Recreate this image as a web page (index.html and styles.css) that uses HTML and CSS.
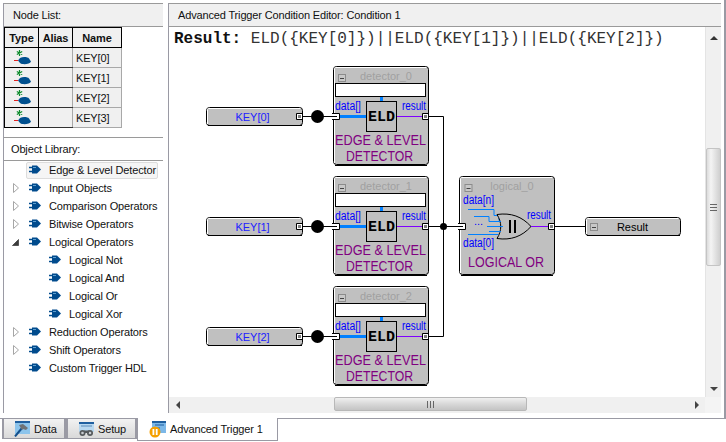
FILE: index.html
```html
<!DOCTYPE html>
<html lang="en">
<head>
  <meta charset="UTF-8">
  <title>Advanced Trigger Condition Editor</title>
  <link rel="stylesheet" href="styles.css">
</head>
<body>
  <!-- shared icons -->
  <svg class="sprite" aria-hidden="true">
    <symbol id="ico-pin" viewBox="0 0 12 10">
      <path d="M0 2.500h4M0 6.500h4" stroke="#004b8d" stroke-width="1.400"/>
      <path d="M3 0.500h5l4 4-4 4H3z" fill="#004b8d"/>
      <path d="M4 2.500h3" stroke="#5f9fd0" stroke-width="1"/>
    </symbol>
    <symbol id="tw-closed" viewBox="0 0 6 10">
      <path d="M0.500 0.500l5 4.500-5 4.500z" fill="#fff" stroke="#a6a6a6"/>
    </symbol>
    <symbol id="tw-open" viewBox="0 0 7 7">
      <path d="M6.500 0.500v6h-6z" fill="#3c3c3c" stroke="#555"/>
    </symbol>
    <symbol id="ico-type" viewBox="0 0 20 18">
      <path d="M6.500 1v6M3.800 2.500l5.400 3M3.800 5.500l5.400-3" stroke="#0a8a2a" stroke-width="1.200"/>
      <path d="M1 11.500h4" stroke="#e02020" stroke-width="1"/>
      <path d="M5 11.500l2-2.500c3-1.500 8-1 9 .5l2 3c-1 3-9 3.500-11 1.500z" fill="#00508f"/>
    </symbol>
  </svg>

  <div class="panes">
    <div class="left-col">
      <div class="node-section">
        <div class="section-head">Node List:</div>
        <table class="node-table">
          <thead>
            <tr><th class="col-type">Type</th><th class="col-alias">Alias</th><th class="col-name">Name</th></tr>
          </thead>
          <tbody>
            <tr><td class="cell-type"><svg class="type-icon"><use href="#ico-type"/></svg></td><td class="cell-alias"></td><td>KEY[0]</td></tr>
            <tr><td class="cell-type"><svg class="type-icon"><use href="#ico-type"/></svg></td><td class="cell-alias"></td><td>KEY[1]</td></tr>
            <tr><td class="cell-type"><svg class="type-icon"><use href="#ico-type"/></svg></td><td class="cell-alias"></td><td>KEY[2]</td></tr>
            <tr><td class="cell-type"><svg class="type-icon"><use href="#ico-type"/></svg></td><td class="cell-alias"></td><td>KEY[3]</td></tr>
          </tbody>
        </table>
      </div>

      <div class="library-section">
        <div class="section-head">Object Library:</div>
        <div class="tree">
          <div class="tree-row"><span class="tw"></span><span class="tree-cell selected"><svg class="pin"><use href="#ico-pin"/></svg>Edge &amp; Level Detector</span></div>
          <div class="tree-row"><span class="tw"><svg class="tw-closed"><use href="#tw-closed"/></svg></span><span class="tree-cell"><svg class="pin"><use href="#ico-pin"/></svg>Input Objects</span></div>
          <div class="tree-row"><span class="tw"><svg class="tw-closed"><use href="#tw-closed"/></svg></span><span class="tree-cell"><svg class="pin"><use href="#ico-pin"/></svg>Comparison Operators</span></div>
          <div class="tree-row"><span class="tw"><svg class="tw-closed"><use href="#tw-closed"/></svg></span><span class="tree-cell"><svg class="pin"><use href="#ico-pin"/></svg>Bitwise Operators</span></div>
          <div class="tree-row"><span class="tw"><svg class="tw-open"><use href="#tw-open"/></svg></span><span class="tree-cell"><svg class="pin"><use href="#ico-pin"/></svg>Logical Operators</span></div>
          <div class="tree-row child"><span class="tree-cell"><svg class="pin"><use href="#ico-pin"/></svg>Logical Not</span></div>
          <div class="tree-row child"><span class="tree-cell"><svg class="pin"><use href="#ico-pin"/></svg>Logical And</span></div>
          <div class="tree-row child"><span class="tree-cell"><svg class="pin"><use href="#ico-pin"/></svg>Logical Or</span></div>
          <div class="tree-row child"><span class="tree-cell"><svg class="pin"><use href="#ico-pin"/></svg>Logical Xor</span></div>
          <div class="tree-row"><span class="tw"><svg class="tw-closed"><use href="#tw-closed"/></svg></span><span class="tree-cell"><svg class="pin"><use href="#ico-pin"/></svg>Reduction Operators</span></div>
          <div class="tree-row"><span class="tw"><svg class="tw-closed"><use href="#tw-closed"/></svg></span><span class="tree-cell"><svg class="pin"><use href="#ico-pin"/></svg>Shift Operators</span></div>
          <div class="tree-row"><span class="tw"></span><span class="tree-cell"><svg class="pin"><use href="#ico-pin"/></svg>Custom Trigger HDL</span></div>
        </div>
      </div>
    </div>

    <div class="right-col">
      <div class="section-head editor-head">Advanced Trigger Condition Editor: Condition 1</div>
      <div class="editor-body">
        <div class="canvas">
          <div class="result-line"><b>Result:</b> ELD({KEY[0]})||ELD({KEY[1]})||ELD({KEY[2]})</div>

          <!-- viewBox is in window pixels so the diagram reads like the screen -->
          <svg class="diagram" viewBox="169 51 536 346">
            <defs>
              <g id="port">
                <rect x="-3" y="-3.500" width="7" height="7" rx="1" fill="#000"/>
                <rect x="-2" y="-2.500" width="5" height="5" fill="#fff"/>
                <rect x="-1" y="-1.500" width="3" height="3" fill="#808080"/>
              </g>
              <g id="minus">
                <rect x="0.500" y="0.500" width="7" height="7" fill="#c8c8c8" stroke="#8c8c8c"/>
                <path d="M2 4.500h4" stroke="#444"/>
              </g>
              <g id="key-box">
                <rect x="206.500" y="107.500" width="96" height="18" rx="3" fill="#c0c0c0" stroke="#000"/>
                <path d="M207.500 124v-14.500q0-1 1-1h92" fill="none" stroke="#fff"/>
                <path d="M208 125.500h94" stroke="#000"/>
                <use href="#port" x="299" y="116.500"/>
                <path d="M303 116.500h27" stroke="#000"/>
                <circle cx="317.500" cy="116.500" r="6.500" fill="#000"/>
              </g>
              <g id="detector">
                <rect x="333.500" y="66.500" width="95" height="98" rx="3" fill="#c0c0c0" stroke="#000"/>
                <path d="M334.500 163v-94.500q0-1 1-1h91" fill="none" stroke="#fff"/>
                <path d="M335 165.500h92" stroke="#000"/>
                <use href="#minus" x="338" y="74"/>
                <rect x="335.500" y="83.500" width="90" height="13" fill="#fff" stroke="#000"/>
                <path d="M381.500 97v4" stroke="#0080ff" stroke-width="3"/>
                <path d="M340 116.500h26" stroke="#0080ff" stroke-width="3"/>
                <path d="M397 116.500h25" stroke="#8000ff"/>
                <rect x="366.500" y="101.500" width="30" height="30" fill="#c0c0c0" stroke="#000"/>
                <path d="M331 113.500h8.500v6H331z" fill="#fff" stroke="#000"/>
                <path d="M331 113v7" stroke="#fff" stroke-width="2"/>
                <path d="M323 116.500h14" stroke="#000"/>
                <use href="#port" x="425" y="116.500"/>
              </g>
            </defs>

            <!-- wires -->
            <path class="wire" d="M428 116.500h15.500v220H428M428 226.500h37M555 226.500h35"/>
            <circle cx="443.500" cy="226.500" r="3.500" fill="#000"/>

            <!-- inputs -->
            <use href="#key-box"/>
            <use href="#key-box" y="110"/>
            <use href="#key-box" y="220"/>
            <text class="t-key" x="252.500" y="120.500" text-anchor="middle">KEY[0]</text>
            <text class="t-key" x="252.500" y="230.500" text-anchor="middle">KEY[1]</text>
            <text class="t-key" x="252.500" y="340.500" text-anchor="middle">KEY[2]</text>

            <!-- detector 0 -->
            <use href="#detector"/>
            <text class="t-title" x="386" y="80" text-anchor="middle">detector_0</text>
            <text class="t-port" x="335" y="110" textLength="26" lengthAdjust="spacingAndGlyphs">data[]</text>
            <text class="t-port" x="402" y="110" textLength="24" lengthAdjust="spacingAndGlyphs">result</text>
            <text class="t-eld" x="381.500" y="121" text-anchor="middle">ELD</text>
            <text class="t-name" x="335" y="145" textLength="91" lengthAdjust="spacingAndGlyphs">EDGE &amp; LEVEL</text>
            <text class="t-name" x="346" y="161" textLength="67" lengthAdjust="spacingAndGlyphs">DETECTOR</text>

            <!-- detector 1 -->
            <use href="#detector" y="110"/>
            <text class="t-title" x="386" y="190" text-anchor="middle">detector_1</text>
            <text class="t-port" x="335" y="220" textLength="26" lengthAdjust="spacingAndGlyphs">data[]</text>
            <text class="t-port" x="402" y="220" textLength="24" lengthAdjust="spacingAndGlyphs">result</text>
            <text class="t-eld" x="381.500" y="231" text-anchor="middle">ELD</text>
            <text class="t-name" x="335" y="255" textLength="91" lengthAdjust="spacingAndGlyphs">EDGE &amp; LEVEL</text>
            <text class="t-name" x="346" y="271" textLength="67" lengthAdjust="spacingAndGlyphs">DETECTOR</text>

            <!-- detector 2 -->
            <use href="#detector" y="220"/>
            <text class="t-title" x="386" y="300" text-anchor="middle">detector_2</text>
            <text class="t-port" x="335" y="330" textLength="26" lengthAdjust="spacingAndGlyphs">data[]</text>
            <text class="t-port" x="402" y="330" textLength="24" lengthAdjust="spacingAndGlyphs">result</text>
            <text class="t-eld" x="381.500" y="341" text-anchor="middle">ELD</text>
            <text class="t-name" x="335" y="365" textLength="91" lengthAdjust="spacingAndGlyphs">EDGE &amp; LEVEL</text>
            <text class="t-name" x="346" y="381" textLength="67" lengthAdjust="spacingAndGlyphs">DETECTOR</text>

            <!-- logical or -->
            <rect x="459.500" y="176.500" width="95" height="98" rx="3" fill="#c0c0c0" stroke="#000"/>
            <path d="M460.500 273v-94.500q0-1 1-1h91" fill="none" stroke="#fff"/>
            <path d="M461 275.500h92" stroke="#000"/>
            <use href="#minus" x="464.500" y="184"/>
            <text class="t-title" x="512" y="190" text-anchor="middle">logical_0</text>
            <text class="t-port" x="463" y="204" textLength="31" lengthAdjust="spacingAndGlyphs">data[n]</text>
            <text class="t-port" x="463" y="247" textLength="31" lengthAdjust="spacingAndGlyphs">data[0]</text>
            <text class="t-port" x="527" y="219" textLength="24" lengthAdjust="spacingAndGlyphs">result</text>
            <path class="bus" d="M468 209.500h26v6h5v5h2M474 216.500h15v5h12M487 226.500h16M489 231.500h12M468 234.500h30"/>
            <text class="t-dots" x="474" y="225">...</text>
            <path d="M497 214.500c14-2 25 2 34 12c-9 10-20 14-34 12c5-8 5-16 0-24z" fill="#c0c0c0" stroke="#000"/>
            <path class="bus" d="M492 221.500h9M490 226.500h13M492 231.500h9"/>
            <rect x="509" y="220" width="2" height="13" fill="#000"/>
            <rect x="514" y="220" width="2" height="13" fill="#000"/>
            <path d="M531 226.500h17" stroke="#8000ff"/>
            <path d="M457 223.500h8.500v6H457z" fill="#fff" stroke="#000"/>
            <path d="M457 223v7" stroke="#fff" stroke-width="2"/>
            <path d="M449 226.500h14" stroke="#000"/>
            <use href="#port" x="551" y="226.500"/>
            <text class="t-name" x="468" y="267" textLength="76" lengthAdjust="spacingAndGlyphs">LOGICAL OR</text>

            <!-- output -->
            <rect x="585.500" y="217.500" width="95" height="18" rx="3" fill="#c0c0c0" stroke="#000"/>
            <path d="M586.500 234v-14.500q0-1 1-1h91" fill="none" stroke="#fff"/>
            <path d="M587 235.500h93" stroke="#000"/>
            <use href="#minus" x="590" y="223"/>
            <text class="t-out" x="632.500" y="230.500" text-anchor="middle">Result</text>
          </svg>
        </div>

        <div class="vscroll">
          <div class="sb-btn sb-top"><span class="arrow-up"></span></div>
          <div class="vthumb"><span class="grip-h"></span></div>
          <div class="sb-btn sb-end"><span class="arrow-down"></span></div>
        </div>
      </div>
      <div class="hscroll">
        <div class="sb-btn-h"><span class="arrow-left"></span></div>
        <div class="hthumb"><span class="grip-v"></span></div>
        <div class="sb-btn-h sb-end-h"><span class="arrow-right"></span></div>
        <div class="sb-corner"></div>
      </div>
    </div>
  </div>

  <div class="tabs">
    <div class="tab">
      <svg class="tab-icon" viewBox="0 0 16 16">
        <rect x="1" y="0" width="15" height="13" fill="#8cc4ec"/>
        <rect x="1" y="0" width="15" height="2" fill="#1f5f9f"/>
        <path d="M1 15.500L8 7" stroke="#14508c" stroke-width="2"/>
        <path d="M5 4l4-1 5 4-2 2-3-1-1 1z" fill="#6e7276"/>
      </svg>
      Data
    </div>
    <div class="tab tab-setup">
      <svg class="tab-icon" viewBox="0 0 16 16">
        <rect x="1" y="1" width="15" height="10" fill="#b8d8f0"/>
        <rect x="1" y="1" width="15" height="2" fill="#1f5f9f"/>
        <path d="M3 5h11" stroke="#5a8ab8"/>
        <circle cx="4.500" cy="12" r="3" fill="#55595c"/>
        <circle cx="12" cy="12" r="3" fill="#55595c"/>
        <circle cx="4.500" cy="12" r="1.300" fill="#c8ccd0"/>
        <circle cx="12" cy="12" r="1.300" fill="#c8ccd0"/>
        <rect x="6" y="9.500" width="5" height="2.500" fill="#55595c"/>
      </svg>
      Setup
    </div>
    <div class="tab tab-active">
      <svg class="tab-icon-lg" viewBox="0 0 18 18">
        <rect x="3" y="1" width="14" height="12" fill="#7cb8e8"/>
        <rect x="3" y="1" width="14" height="2" fill="#1f5f9f"/>
        <path d="M6 5h9M6 8h5" stroke="#1f5f9f"/>
        <circle cx="6" cy="12" r="5.500" fill="#f5a000"/>
        <rect x="3.500" y="9" width="1.800" height="6" fill="#fff"/>
        <rect x="6.800" y="9" width="1.800" height="6" fill="#fff"/>
      </svg>
      Advanced Trigger 1
    </div>
  </div>
</body>
</html>
```

FILE: styles.css
```css
* {
  box-sizing: border-box;
}
body {
  margin: 0;
  width: 726px;
  height: 442px;
  overflow: hidden;
  background-color: #fff;
  font-family: "Liberation Sans", Arial, sans-serif;
  font-size: 11px;
  letter-spacing: -0.15px;
  color: #111;
}
.sprite {
  position: absolute;
  width: 0;
  height: 0;
}

/* panes */
.panes {
  display: flex;
  height: 419px;
  padding: 3px 0 5px 3px;
  border-right: 2px solid #9a9aa4;
  border-bottom: 1px solid #9a9aa4;
}
.left-col {
  display: flex;
  flex-direction: column;
  width: 160px;
  border-left: 1px solid #9a9aa4;
}
.node-section {
  height: 134px;
}
.library-section {
  flex: 1;
}
.section-head {
  height: 24px;
  line-height: 22px;
  padding-left: 9px;
  background-color: #f0f0f0;
  border-top: 1px solid #9a9a9a;
  border-bottom: 1px solid #9a9a9a;
}
.library-section .section-head {
  padding-left: 7px;
  background-color: #fff;
}
.right-col {
  flex: 1;
  display: flex;
  flex-direction: column;
  margin: 0 3px 0 5px;
  border-left: 1px solid #9a9aa4;
}
.editor-head {
  padding-left: 9px;
}

/* node table */
.node-table {
  width: 118px;
  table-layout: fixed;
  border-collapse: collapse;
}
.node-table th,
.node-table td {
  height: 20px;
  padding: 0;
  background-color: #f0f0f0;
  border: 1px solid #a8a8a8;
}
.node-table th {
  font-weight: bold;
  text-align: center;
  border: 1px solid #000;
}
.node-table td {
  padding-left: 3px;
}
.node-table .cell-type {
  padding: 0;
  text-align: center;
  border: 1px solid #000;
}
.node-table .cell-alias {
  border-top-color: #333;
  border-bottom-color: #333;
}
.col-type {
  width: 34px;
}
.col-alias {
  width: 34px;
}
.type-icon {
  display: block;
  width: 20px;
  height: 18px;
  margin-left: 8px;
}

/* tree */
.tree-row {
  display: flex;
  align-items: center;
  height: 18px;
  padding-left: 8px;
}
.tree-row.child {
  padding-left: 44px;
}
.tw {
  display: flex;
  align-items: center;
  flex: none;
  width: 14px;
}
.tw-closed {
  width: 6px;
  height: 10px;
  margin-left: 1px;
}
.tw-open {
  width: 7px;
  height: 7px;
}
.tree-cell {
  display: flex;
  align-items: center;
  height: 17px;
  padding-left: 2px;
  border: 1px solid transparent;
  white-space: nowrap;
}
.tree-row.child .tree-cell {
  padding-left: 0;
}
.tree-cell.selected {
  width: 132px;
  background-color: #f5f5f5;
  border-color: #dcdcdc;
  border-radius: 2px;
}
.pin {
  width: 12px;
  height: 10px;
  margin-right: 8px;
  flex: none;
}

/* editor */
.editor-body {
  flex: 1;
  display: flex;
  min-height: 0;
}
.canvas {
  flex: 1;
}
.result-line {
  height: 24px;
  padding: 3px 0 0 5px;
  font-family: "Liberation Mono", "Courier New", monospace;
  font-size: 16px;
  line-height: 18px;
  letter-spacing: 0;
  color: #333;
  white-space: nowrap;
}
.result-line b {
  color: #111;
}
.diagram {
  display: block;
  width: 536px;
  height: 346px;
}
.wire {
  fill: none;
  stroke: #000;
}
.bus {
  fill: none;
  stroke: #0080ff;
}
.diagram text {
  font-family: "Liberation Sans", Arial, sans-serif;
  letter-spacing: 0;
}
.t-key {
  font-size: 11px;
  fill: #2020ff;
}
.t-out {
  font-size: 11px;
  fill: #000;
}
.t-title {
  font-size: 11px;
  fill: #a0a0a0;
}
.t-port {
  font-size: 12px;
  fill: #0000ff;
}
.t-dots {
  font-size: 11px;
  fill: #0000ff;
}
.diagram .t-eld {
  font-family: "Liberation Mono", monospace;
  font-size: 15px;
  font-weight: bold;
  fill: #000;
}
.t-name {
  font-size: 14px;
  fill: #800080;
}

/* scrollbars */
.vscroll {
  display: flex;
  flex-direction: column;
  width: 16px;
  background-color: #f0f0f0;
  border-left: 1px solid #e4e4e4;
}
.sb-btn {
  display: flex;
  align-items: center;
  justify-content: center;
  height: 17px;
}
.sb-top {
  height: 22px;
}
.sb-end {
  margin-top: auto;
}
.vthumb {
  display: flex;
  align-items: center;
  justify-content: center;
  height: 118px;
  margin-top: 99px;
  background: linear-gradient(to right, #dcdcdc, #f4f4f4 30%, #cfcfcf);
  border: 1px solid #c4c4c4;
  border-radius: 2px;
}
.grip-h {
  width: 7px;
  height: 7px;
  background: repeating-linear-gradient(to bottom, #666 0 1px, transparent 1px 3px);
}
.hscroll {
  display: flex;
  align-items: center;
  height: 16px;
  background-color: #f0f0f0;
}
.sb-btn-h {
  display: flex;
  align-items: center;
  justify-content: center;
  width: 17px;
  height: 16px;
}
.sb-end-h {
  margin-left: auto;
}
.hthumb {
  display: flex;
  align-items: center;
  justify-content: center;
  width: 193px;
  height: 14px;
  margin: 0 0 2px 148px;
  background: linear-gradient(to bottom, #f0f0f0, #d8d8d8 50%, #c4c4c4);
  border: 1px solid #b8b8b8;
  border-radius: 2px;
}
.grip-v {
  width: 7px;
  height: 7px;
  background: repeating-linear-gradient(to right, #666 0 1px, transparent 1px 3px);
}
.sb-corner {
  width: 16px;
  height: 16px;
  background-color: #f4f4f4;
}
.arrow-up {
  border: 4px solid transparent;
  border-top: 0;
  border-bottom: 4px solid #333;
}
.arrow-down {
  border: 4px solid transparent;
  border-bottom: 0;
  border-top: 4px solid #444;
}
.arrow-left {
  border: 4px solid transparent;
  border-left: 0;
  border-right: 4px solid #444;
}
.arrow-right {
  border: 4px solid transparent;
  border-right: 0;
  border-left: 4px solid #444;
}

/* tabs */
.tabs {
  display: flex;
  height: 23px;
  padding-left: 2px;
}
.tab {
  display: flex;
  align-items: center;
  width: 64px;
  height: 20px;
  padding-left: 10px;
  background: linear-gradient(to bottom, #f2f2f2, #d9d9d9);
  border-left: 2px solid #9a9aa4;
  border-right: 2px solid #9a9aa4;
  border-bottom: 1px solid #9a9aa4;
  white-space: nowrap;
}
.tab-setup {
  width: 71px;
  margin-left: 0;
}
.tab-active {
  width: 141px;
  height: 23px;
  margin-top: -1px;
  padding: 0 0 0 11px;
  background: #fff;
  border-left: 1px solid #9a9aa4;
  border-right: 1px solid #9a9aa4;
  border-bottom: 1px solid #9a9aa4;
}
.tab-icon {
  width: 16px;
  height: 16px;
  margin-right: 4px;
}
.tab-icon-lg {
  width: 18px;
  height: 18px;
  margin-right: 3px;
}
```
